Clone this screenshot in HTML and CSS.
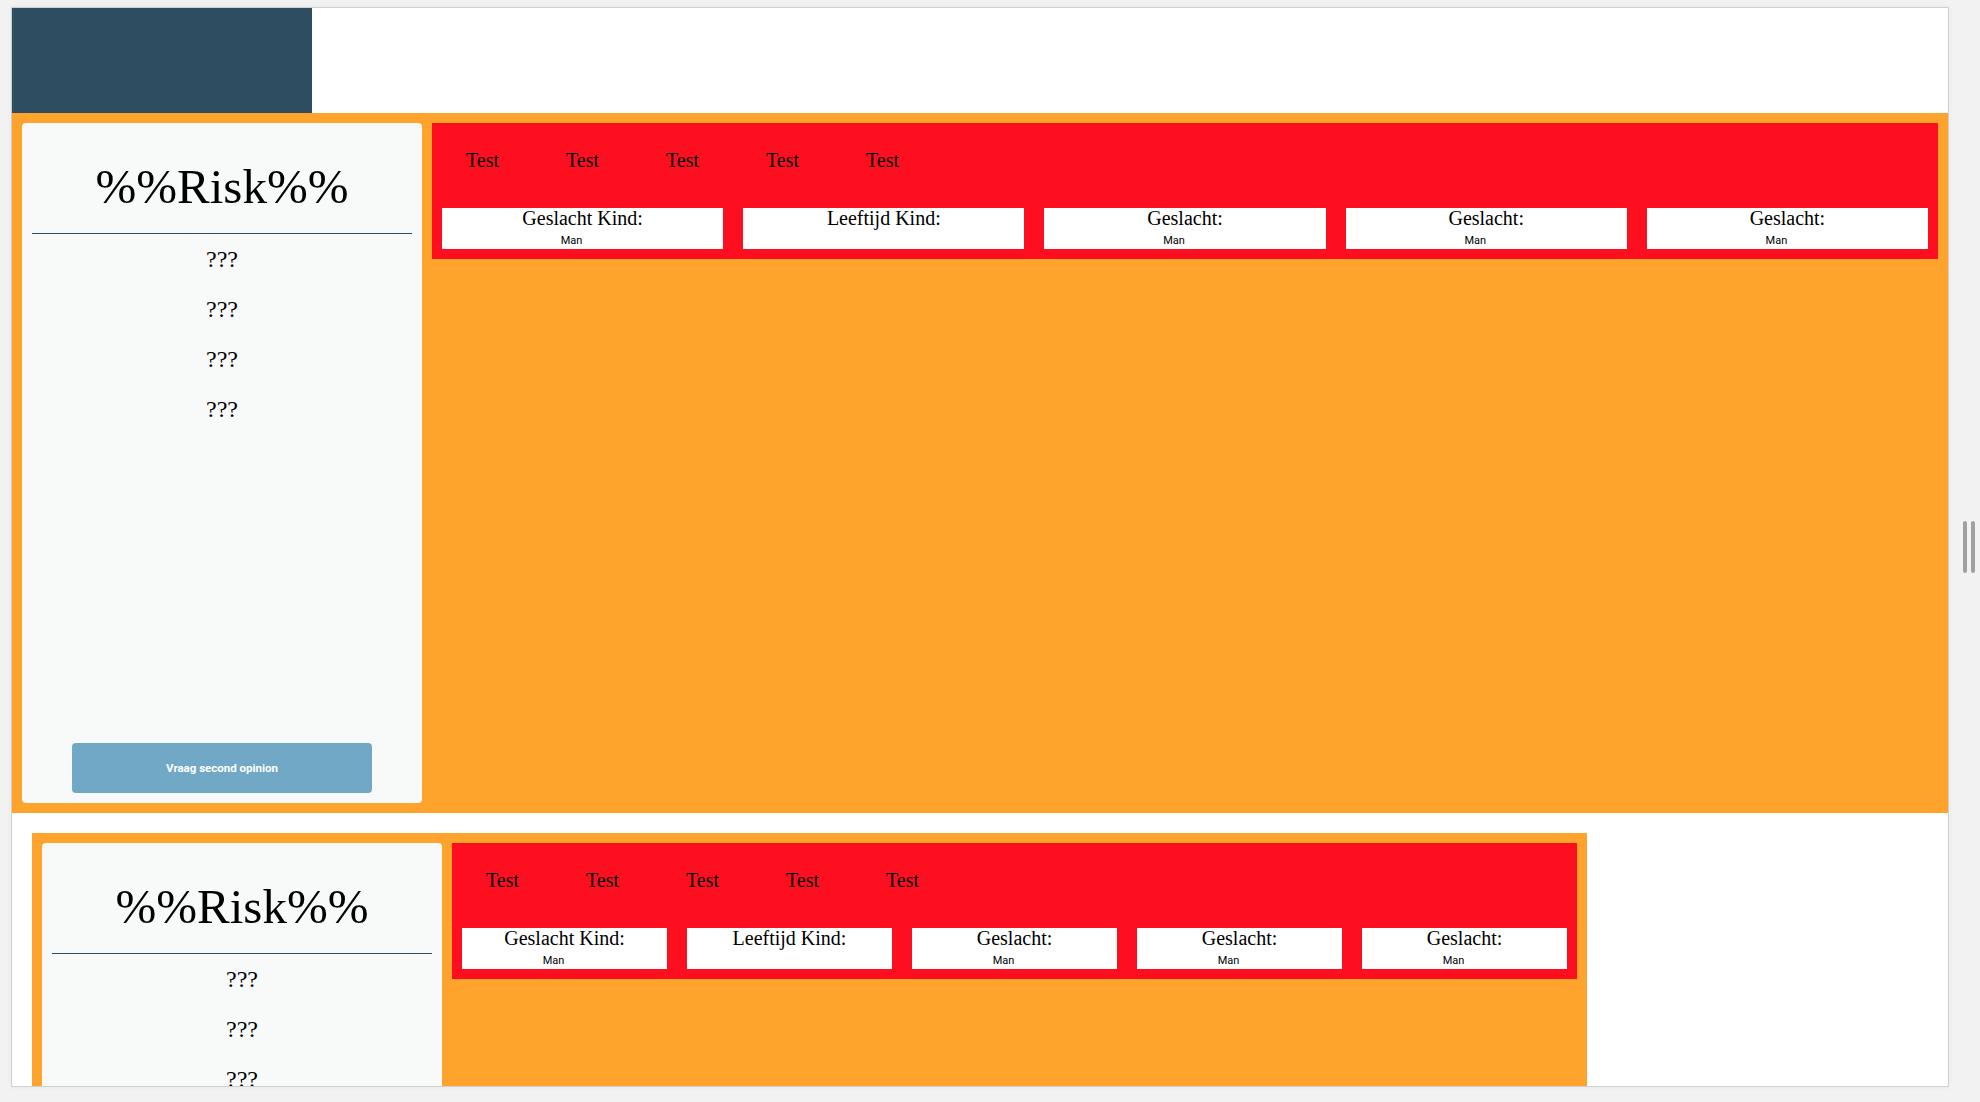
FILE: index.html
```html
<!DOCTYPE html>
<html lang="nl">
<head>
<meta charset="utf-8">
<title>Risk</title>
<link rel="stylesheet" href="styles.css">
</head>
<body>
<div class="desk">
  <div class="viewport">
    <header class="topbar"><div class="brand"></div></header>

    <section class="panel panel-full">
      <aside class="card">
        <h1 class="risk">%%Risk%%</h1>
        <hr class="rule">
        <p class="q">???</p>
        <p class="q">???</p>
        <p class="q">???</p>
        <p class="q">???</p>
        <button class="btn">Vraag second opinion</button>
      </aside>
      <div class="main">
        <div class="tabs"><span>Test</span><span>Test</span><span>Test</span><span>Test</span><span>Test</span></div>
        <div class="fields">
          <div class="field"><div class="label">Geslacht Kind:</div><div class="value">Man</div></div>
          <div class="field"><div class="label">Leeftijd Kind:</div><div class="value"></div></div>
          <div class="field"><div class="label">Geslacht:</div><div class="value">Man</div></div>
          <div class="field"><div class="label">Geslacht:</div><div class="value">Man</div></div>
          <div class="field"><div class="label">Geslacht:</div><div class="value">Man</div></div>
        </div>
      </div>
    </section>

    <section class="panel panel-small">
      <aside class="card">
        <h1 class="risk">%%Risk%%</h1>
        <hr class="rule">
        <p class="q">???</p>
        <p class="q">???</p>
        <p class="q">???</p>
        <p class="q">???</p>
        <button class="btn">Vraag second opinion</button>
      </aside>
      <div class="main">
        <div class="tabs"><span>Test</span><span>Test</span><span>Test</span><span>Test</span><span>Test</span></div>
        <div class="fields">
          <div class="field"><div class="label">Geslacht Kind:</div><div class="value">Man</div></div>
          <div class="field"><div class="label">Leeftijd Kind:</div><div class="value"></div></div>
          <div class="field"><div class="label">Geslacht:</div><div class="value">Man</div></div>
          <div class="field"><div class="label">Geslacht:</div><div class="value">Man</div></div>
          <div class="field"><div class="label">Geslacht:</div><div class="value">Man</div></div>
        </div>
      </div>
    </section>
  </div>
  <div class="handle"><span class="bar"></span><span class="bar"></span></div>
</div>
</body>
</html>
```
FILE: styles.css
```css
html, body {
  margin: 0;
  padding: 0;
}
body {
  background: #f2f2f2;
  width: 1980px;
  height: 1102px;
  overflow: hidden;
  font-family: "Liberation Serif", "Times New Roman", serif;
  color: #000;
}
.desk {
  display: flex;
  align-items: flex-start;
  padding: 7px 0 0 11px;
}
.viewport {
  width: 1936px;
  height: 1078px;
  border: 1px solid #cfcfcf;
  background: #fff;
  overflow: hidden;
  flex: none;
  box-shadow: 0 0 6px rgba(0,0,0,0.04);
}
.topbar {
  height: 105px;
  display: flex;
}
.brand {
  width: 300px;
  background: #2f4d60;
}
.panel {
  display: flex;
  align-items: flex-start;
  gap: 10px;
  padding: 10px;
  height: 700px;
  box-sizing: border-box;
  background: #fea42c;
}
.panel-full {
  width: 1936px;
}
.panel-small {
  width: 1555px;
  margin: 20px 0 0 20px;
}
.card {
  width: 400px;
  flex: none;
  align-self: stretch;
  background: #f8faf9;
  border-radius: 4px;
  display: flex;
  flex-direction: column;
  padding: 36px 0 10px;
  box-sizing: border-box;
}
.risk {
  margin: 0;
  font-size: 49px;
  line-height: 56px;
  font-weight: normal;
  text-align: center;
}
.rule {
  border: 0;
  height: 1px;
  background: #2f4d60;
  margin: 18px 10px 0;
}
.q {
  margin: 0;
  font-size: 24px;
  line-height: 50px;
  text-align: center;
}
.btn {
  margin-top: auto;
  align-self: center;
  width: 300px;
  height: 50px;
  border: 0;
  border-radius: 4px;
  background: #71a8c5;
  color: #fff;
  font-family: Roboto, "Liberation Sans", sans-serif;
  font-weight: bold;
  font-size: 11.5px;
}
.main {
  flex: 1;
  background: #fd0f1f;
  padding: 25px 10px 10px;
}
.tabs {
  display: flex;
  height: 24px;
  padding-left: 24px;
  margin-bottom: 36px;
}
.tabs span {
  width: 100px;
  font-size: 20px;
  line-height: 24px;
}
.fields {
  display: flex;
  gap: 20px;
}
.field {
  flex: 1;
  background: #fff;
  text-align: center;
}
.label {
  font-size: 20px;
  line-height: 20px;
}
.value {
  font-family: Roboto, "Liberation Sans", sans-serif;
  font-size: 11px;
  line-height: 17px;
  height: 17px;
  padding: 4px 22px 0 0;
}
.handle {
  flex: none;
  display: flex;
  gap: 4px;
  padding: 514px 0 0 14px;
}
.bar {
  width: 4px;
  height: 52px;
  border-radius: 2px;
  background: #a0a0a0;
}
```
